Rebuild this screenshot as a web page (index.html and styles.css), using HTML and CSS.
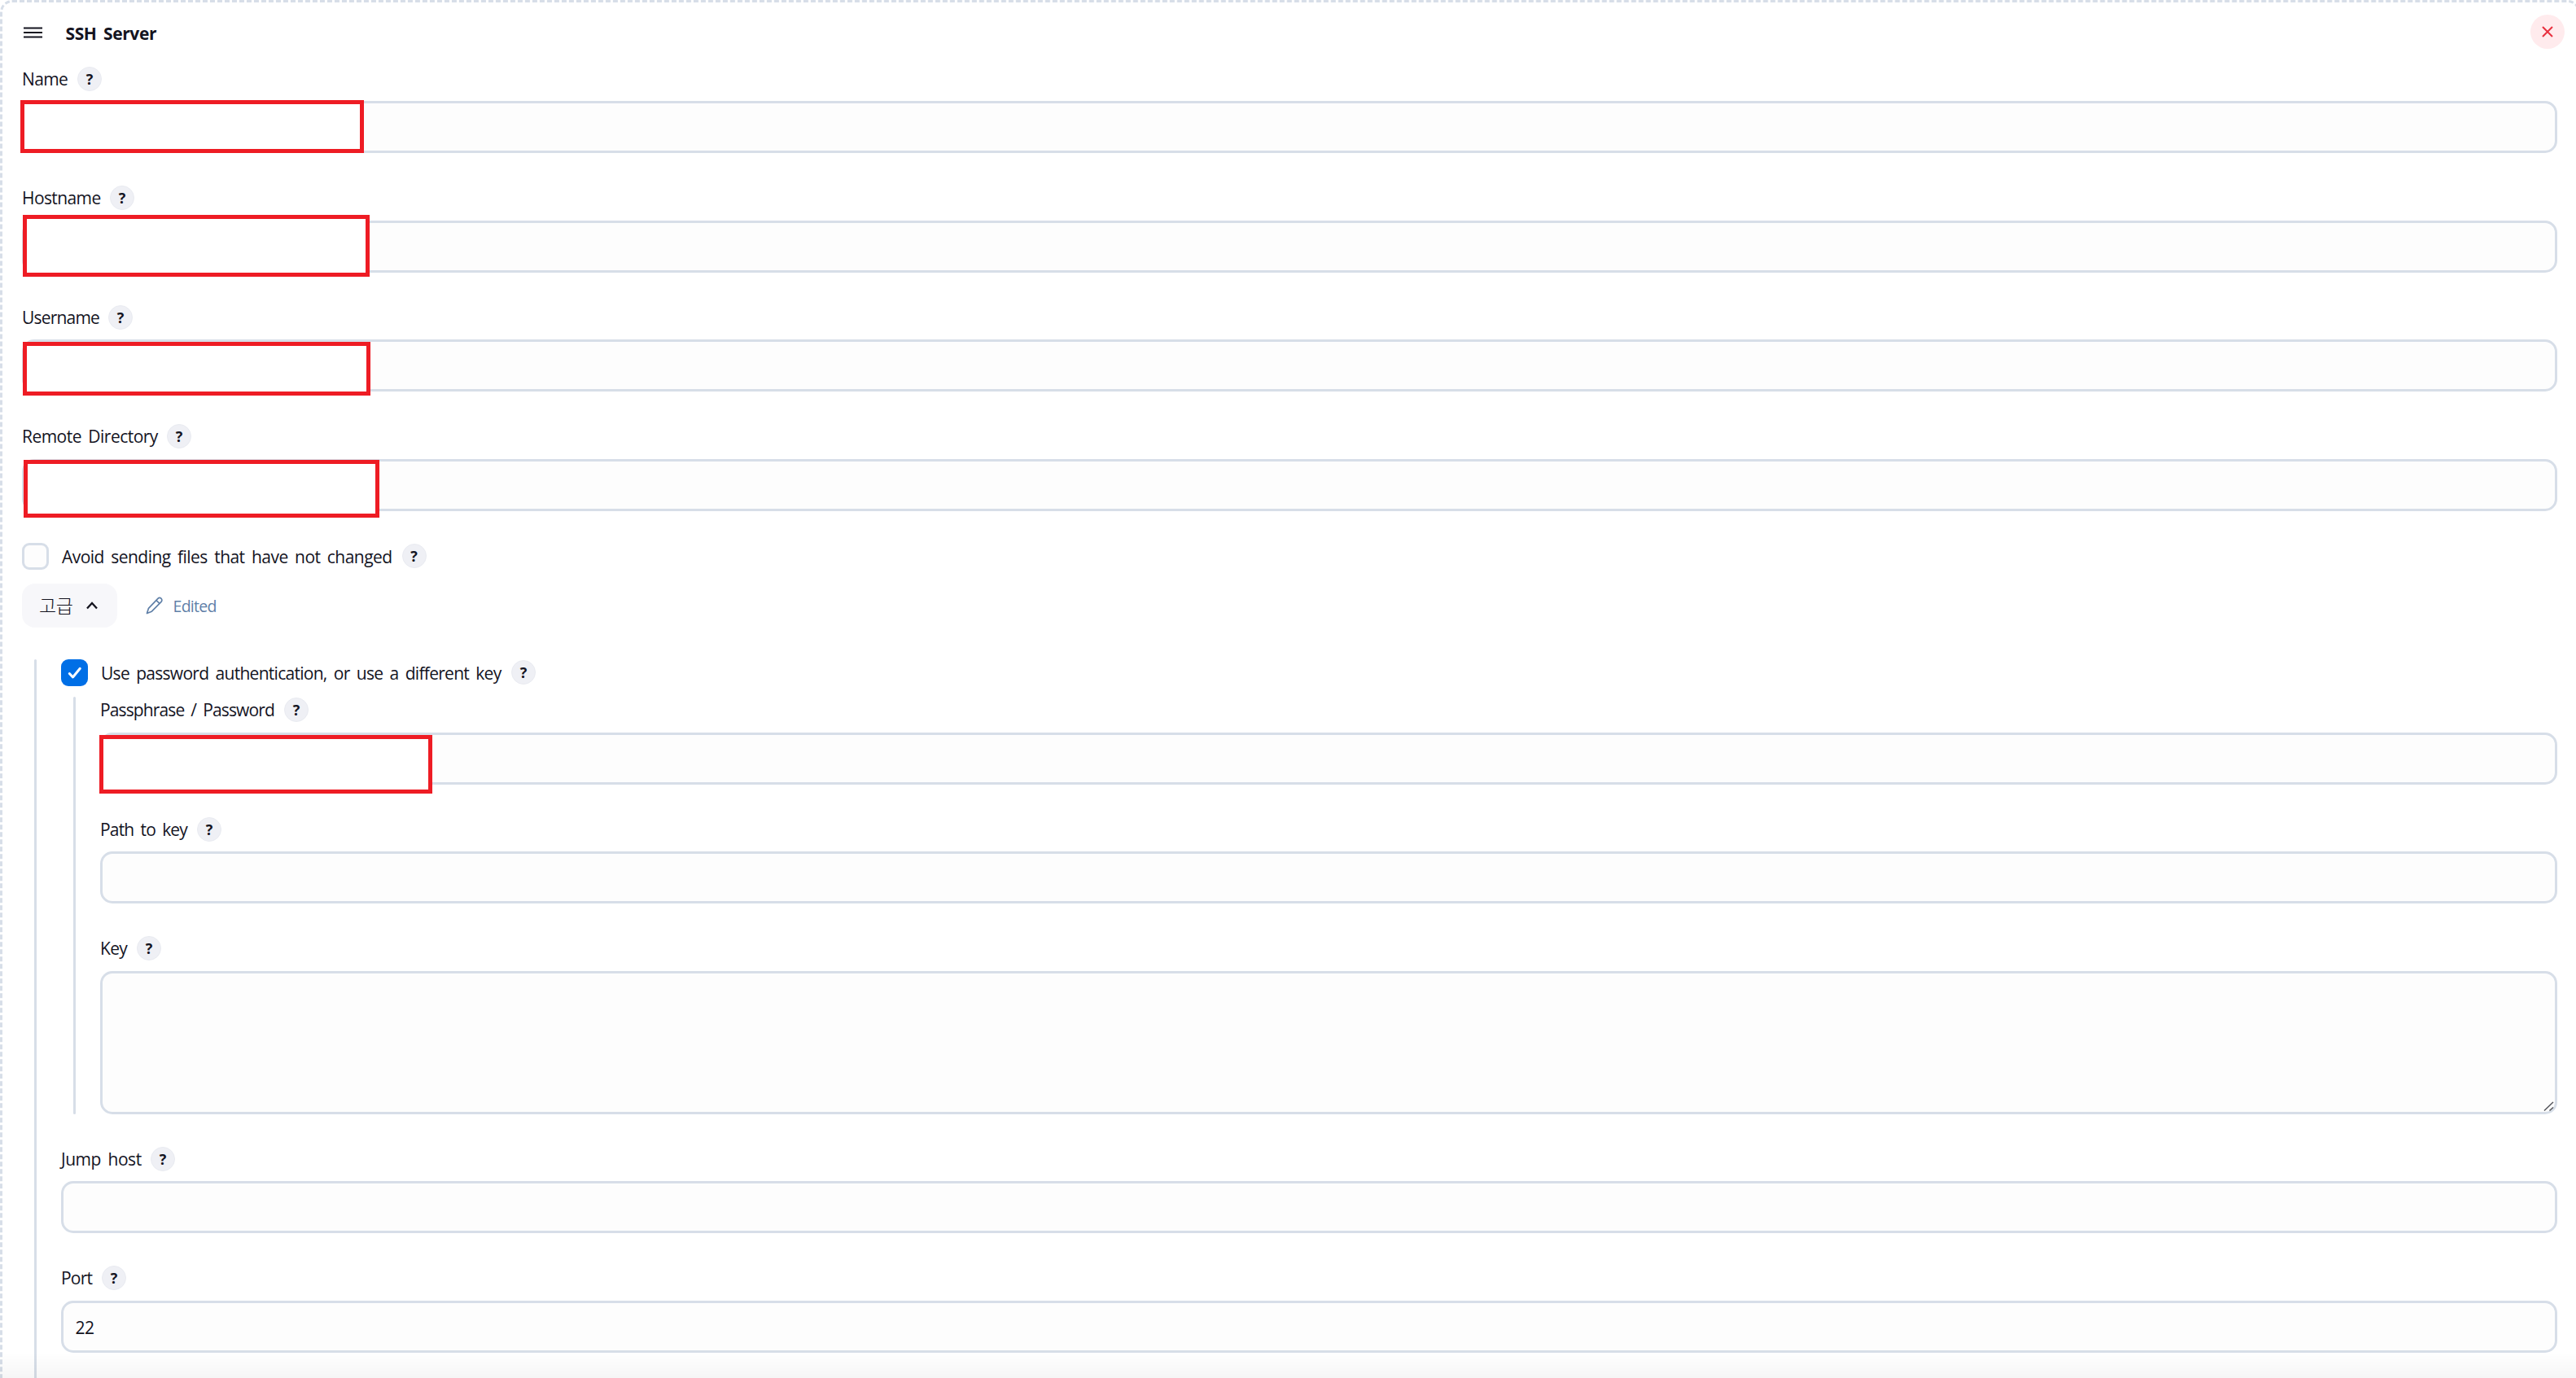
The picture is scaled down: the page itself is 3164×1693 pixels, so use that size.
FILE: index.html
```
<!DOCTYPE html>
<html lang="ko">
<head>
<meta charset="utf-8">
<title>SSH Server</title>
<link rel="stylesheet" href="styles.css">
</head>
<body>
<main class="card">
  <header class="card-header">
    <svg class="handle" width="23" height="14" viewBox="0 0 23 14"><path d="M0 1.5h23M0 7h23M0 12.5h23"/></svg>
    <h1 class="title">SSH Server</h1>
    <button class="close" aria-label="Delete"><svg width="14" height="14" viewBox="0 0 14 14"><path d="M1 1l12 12M13 1L1 13"/></svg></button>
  </header>

  <div class="field">
    <div class="label"><span class="text t-name">Name</span><span class="help">?</span></div>
    <div class="control"><input class="input" type="text"><span class="mask mask-name"></span></div>
  </div>
  <div class="field">
    <div class="label"><span class="text t-hostname">Hostname</span><span class="help">?</span></div>
    <div class="control"><input class="input" type="text"><span class="mask mask-hostname"></span></div>
  </div>
  <div class="field">
    <div class="label"><span class="text t-username">Username</span><span class="help">?</span></div>
    <div class="control"><input class="input" type="text"><span class="mask mask-username"></span></div>
  </div>
  <div class="field">
    <div class="label"><span class="text t-remote">Remote Directory</span><span class="help">?</span></div>
    <div class="control"><input class="input" type="text"><span class="mask mask-remote"></span></div>
  </div>

  <div class="check-row">
    <span class="checkbox"></span>
    <span class="text t-avoid">Avoid sending files that have not changed</span><span class="help">?</span>
  </div>

  <div class="advanced-bar">
    <button class="advanced"><span class="advanced-text">고급</span><svg width="16" height="12" viewBox="0 0 16 12"><path d="M2 9.5L8 3l6 6.500"/></svg></button>
    <span class="edited">
      <svg width="22" height="22" viewBox="0 0 22 22"><path d="M1.500 20.500l2-6.200L14.700 2.600c1.300-1.300 3.100-1.400 4.300-.3s1.100 3-.2 4.300L7.400 18.200zM13 4.600l4.200 4"/></svg>
      <span class="edited-text">Edited</span>
    </span>
  </div>

  <section class="nest">
    <div class="rail"></div>
    <div class="nest-body">
      <div class="check-row check-row-key">
        <span class="checkbox checked"><svg width="33" height="33" viewBox="0 0 33 33"><path d="M10.300 17.500l4.200 4.500 8.800-10.700"/></svg></span>
        <span class="text t-usekey">Use password authentication, or use a different key</span><span class="help">?</span>
      </div>
      <section class="nest nest-key">
        <div class="rail"></div>
        <div class="nest-body nest-body-key">
          <div class="field">
            <div class="label"><span class="text t-pass">Passphrase / Password</span><span class="help">?</span></div>
            <div class="control"><input class="input" type="text"><span class="mask mask-pass"></span></div>
          </div>
          <div class="field">
            <div class="label"><span class="text t-path">Path to key</span><span class="help">?</span></div>
            <div class="control"><input class="input" type="text"></div>
          </div>
          <div class="field field-last">
            <div class="label"><span class="text t-key">Key</span><span class="help">?</span></div>
            <div class="control"><textarea class="input area"></textarea><svg class="grip" width="13" height="12" viewBox="0 0 13 12"><path d="M1 11.500L12 1M7.500 11.500L12 7.500"/></svg></div>
          </div>
        </div>
      </section>
      <div class="field">
        <div class="label"><span class="text t-jump">Jump host</span><span class="help">?</span></div>
        <div class="control"><input class="input" type="text"></div>
      </div>
      <div class="field">
        <div class="label"><span class="text t-port">Port</span><span class="help">?</span></div>
        <div class="control"><input class="input" type="text" value="22"></div>
      </div>
    </div>
  </section>
</main>
<div class="fade"></div>
</body>
</html>
```
FILE: styles.css
```
* { box-sizing: border-box; }

html, body { height: 100%; }

body {
  margin: 0;
  overflow: hidden;
  background: #fff;
  color: #14141f;
  font: 21px/30px "Open Sans", "Noto Sans CJK KR", sans-serif;
}

button { border: 0; padding: 0; font: inherit; color: inherit; }
svg { display: block; fill: none; }

.card {
  width: 3169px;
  height: 1720px;
  padding: 15px 25px 0 24px;
  border: 3px dashed #d7dee8;
  border-radius: 15px;
}

.card-header {
  display: flex;
  align-items: center;
  height: 42px;
  margin: 0 -9px 21.600px 2px;
}
.handle { stroke: #14141f; stroke-width: 2; margin-top: 2px; }
.title {
  margin: 3px 0 0 28.500px;
  font-size: 21px;
  font-weight: 700;
  letter-spacing: -.4px;
  word-spacing: 3.500px;
}
.close {
  display: grid;
  place-items: center;
  width: 42px;
  height: 42px;
  margin-left: auto;
  border-radius: 50%;
  background: #ffebed;
}
.close svg { stroke: #e8303f; stroke-width: 2; }

.field { margin-bottom: 39.900px; }
.field-last { margin-bottom: 0; }
.label { display: flex; align-items: center; height: 30px; margin-bottom: 12.600px; }
.text { flex: none; margin-right: 12px; white-space: nowrap; word-spacing: 3.500px; }

/* Label widths and tracking */
.t-name { width: 56px; letter-spacing: -.67px; }
.t-hostname { width: 96px; letter-spacing: -.6px; }
.t-username { width: 94px; letter-spacing: -.8px; }
.t-remote { width: 166px; letter-spacing: -.53px; }
.t-avoid { width: 405.500px; letter-spacing: -.54px; }
.t-usekey { width: 492px; letter-spacing: -.72px; }
.t-pass { width: 214px; letter-spacing: -.88px; }
.t-path { width: 107px; letter-spacing: -.82px; }
.t-key { width: 33px; letter-spacing: -.73px; }
.t-jump { width: 98px; letter-spacing: -.45px; }
.t-port { width: 38px; letter-spacing: -.82px; }

.help {
  display: grid;
  place-items: center;
  width: 30px;
  height: 30px;
  border: 1px solid #e9ebf1;
  border-radius: 50%;
  background: #eff0f5;
  font-size: 18px;
  font-weight: 700;
  line-height: 28px;
}

.control { position: relative; }
.input {
  display: block;
  width: 100%;
  height: 64px;
  padding: 3px 14.500px 0;
  border: 3px solid #d7dee8;
  border-radius: 15px;
  outline: 0;
  background: #fdfdfd;
  color: inherit;
  font: inherit;
  letter-spacing: -.5px;
}
.area { height: 176.200px; resize: none; }
.grip { position: absolute; right: 4px; bottom: 4px; stroke: #55565c; stroke-width: 1.500; }

/* Redaction boxes over the values */
.mask { position: absolute; border: 5px solid #ee1c24; background: #fff; }
.mask-name { left: -2px; top: -1px; width: 422px; height: 65px; }
.mask-hostname { left: 1px; top: -7px; width: 426px; height: 76px; }
.mask-username { left: 1px; top: 3px; width: 427px; height: 66px; }
.mask-remote { left: 2px; top: 1px; width: 437px; height: 71px; }
.mask-pass { left: -1px; top: 3px; width: 409px; height: 72px; }

.check-row { display: flex; align-items: center; height: 33px; margin-top: -.6px; }
.check-row .text { padding-top: 1.500px; }
.checkbox {
  width: 33px;
  height: 33px;
  margin-right: 16px;
  border: 3px solid #d7dee8;
  border-radius: 9px;
  background: #fdfdfd;
}
.checked { border: 0; background: #006fe6; }
.checked svg { stroke: #fff; stroke-width: 3; stroke-linecap: round; stroke-linejoin: round; }

.advanced-bar { display: flex; align-items: center; margin: 17px 0 39px; }
.advanced {
  display: flex;
  align-items: center;
  gap: 15px;
  width: 117px;
  height: 54px;
  padding-left: 21px;
  border-radius: 16px;
  background: #f7f7fa;
  font-family: "Noto Sans CJK KR", sans-serif;
  font-size: 23px;
  font-weight: 300;
  letter-spacing: -.4px;
}
.advanced-text { padding-bottom: 2px; }
.advanced svg { stroke: #14141f; stroke-width: 2.300; }
.edited { display: flex; align-items: center; margin-left: 35px; color: #6080a8; }
.edited svg { stroke: currentColor; stroke-width: 1.700; stroke-linejoin: round; }
.edited-text { margin-left: 11.500px; padding-top: 2px; font-size: 19.500px; letter-spacing: -.7px; }

.nest { display: flex; gap: 30px; margin-left: 15px; }
.rail { flex: none; width: 3px; border-radius: 2px; background: #d7dee8; }
.nest-body { flex: 1; min-width: 0; }
.check-row-key { margin: 0 0 13px; }
.nest-key { margin-bottom: 39.900px; }
.nest-body-key { padding-top: 1.200px; }

.fade {
  position: fixed;
  inset: auto 0 0;
  height: 32px;
  background: linear-gradient(transparent, rgba(0, 0, 0, .035));
}
```
